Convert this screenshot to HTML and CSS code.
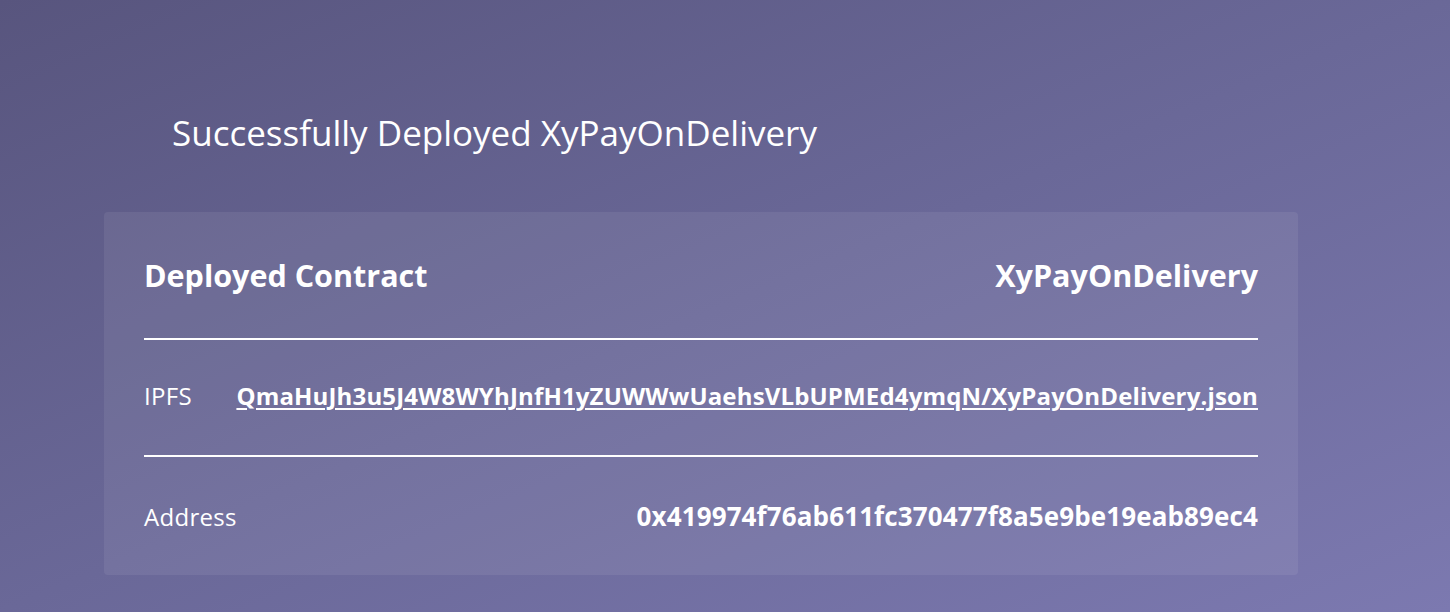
FILE: index.html
```html
<!DOCTYPE html>
<html lang="en">
<head>
<meta charset="utf-8">
<title>Deployment</title>
<link rel="stylesheet" href="styles.css">
</head>
<body>
<main class="page">
  <h1 class="title">Successfully Deployed XyPayOnDelivery</h1>
  <section class="card">
    <div class="row row-head">
      <span class="head-label">Deployed Contract</span>
      <span class="head-value">XyPayOnDelivery</span>
    </div>
    <div class="row row-ipfs">
      <span class="label">IPFS</span>
      <a class="link" href="#">QmaHuJh3u5J4W8WYhJnfH1yZUWWwUaehsVLbUPMEd4ymqN/XyPayOnDelivery.json</a>
    </div>
    <div class="row row-addr">
      <span class="label">Address</span>
      <span class="value">0x419974f76ab611fc370477f8a5e9be19eab89ec4</span>
    </div>
  </section>
</main>
</body>
</html>
```
FILE: styles.css
```css
html, body {
  margin: 0;
  height: 100%;
}
body {
  font-family: "Open Sans", "Noto Sans", sans-serif;
  color: #ffffff;
  background: linear-gradient(to bottom right, #58557e 0%, #6a6898 50%, #7c79b0 100%);
  min-height: 612px;
}
.page {
  padding: 109px 152px 0 104px;
}
.title {
  margin: 0 0 55px 68px;
  font-size: 35px;
  line-height: 48px;
  font-weight: 400;
}
.card {
  background: rgba(255, 255, 255, 0.07);
  border-radius: 4px;
  padding: 43px 40px 0 40px;
}
.row {
  display: flex;
  justify-content: space-between;
  align-items: baseline;
}
.row-head {
  padding-bottom: 43px;
  border-bottom: 2px solid #ffffff;
  font-weight: 700;
  font-size: 30.5px;
  line-height: 40px;
}
.row-ipfs {
  padding: 40px 0 43px;
  border-bottom: 2px solid #ffffff;
  font-size: 24px;
  line-height: 32px;
}
.row-addr {
  padding: 43px 0 42px;
  font-size: 24px;
  line-height: 32px;
}
.label {
  font-weight: 400;
  letter-spacing: 0.3px;
}
.link {
  color: #ffffff;
  font-weight: 700;
  letter-spacing: 0.16px;
  text-decoration: underline;
  text-decoration-thickness: 2px;
  text-underline-offset: 3px;
  white-space: nowrap;
}
.value {
  font-weight: 700;
  font-size: 26px;
  letter-spacing: 0.12px;
}
```
